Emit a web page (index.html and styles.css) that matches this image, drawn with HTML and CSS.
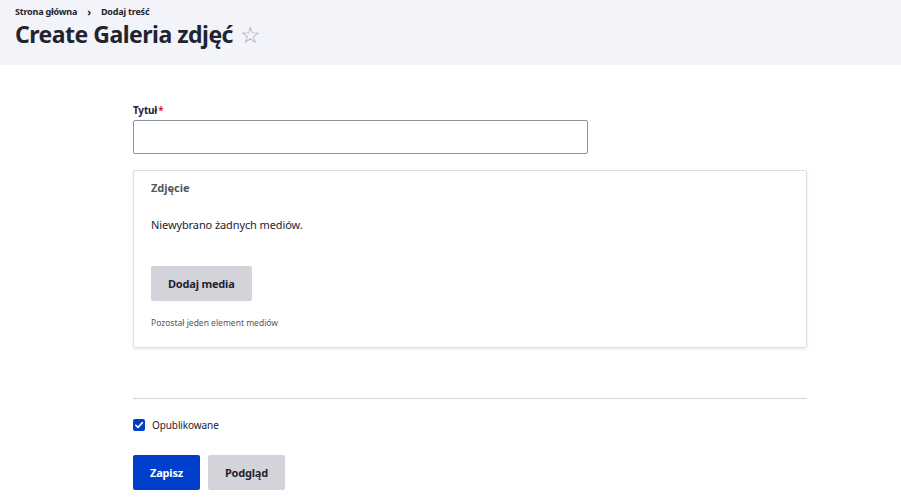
FILE: index.html
```html
<!DOCTYPE html>
<html lang="pl">
<head>
<meta charset="utf-8">
<title>Create Galeria zdjęć</title>
<link rel="stylesheet" href="styles.css">
</head>
<body>
<header class="page-header">
  <nav class="breadcrumb">
    <a href="#">Strona główna</a>
    <span class="sep">›</span>
    <a href="#">Dodaj treść</a>
  </nav>
  <h1 class="title">Create Galeria zdjęć <span class="star">☆</span></h1>
</header>
<main class="content">
  <form class="form">
    <div class="field">
      <label class="label">Tytuł<span class="req">*</span></label>
      <input class="input" type="text">
    </div>
    <fieldset class="media">
      <div class="media-legend">Zdjęcie</div>
      <p class="media-empty">Niewybrano żadnych mediów.</p>
      <button type="button" class="btn btn-secondary btn-media">Dodaj media</button>
      <p class="media-note">Pozostał jeden element mediów</p>
    </fieldset>
    <hr class="divider">
    <label class="check">
      <span class="box"><svg viewBox="0 0 12 12" width="12" height="12"><path d="M2.8 6.2 5 8.4 9.4 3.6" fill="none" stroke="#fff" stroke-width="1.6" stroke-linecap="round" stroke-linejoin="round"/></svg></span>
      <span class="check-label">Opublikowane</span>
    </label>
    <div class="actions">
      <button type="button" class="btn btn-primary">Zapisz</button>
      <button type="button" class="btn btn-secondary">Podgląd</button>
    </div>
  </form>
</main>
</body>
</html>
```
FILE: styles.css
```css
* { box-sizing: border-box; }
html, body { margin: 0; padding: 0; }
body {
  font-family: "Noto Sans", "Open Sans", sans-serif;
  color: #222330;
  background: #fff;
  width: 901px;
  height: 497px;
  overflow: hidden;
}
.page-header {
  background: #f3f4f9;
  height: 65px;
  padding: 5px 15px 0;
}
.breadcrumb {
  font-size: 9px;
  font-weight: 700;
  letter-spacing: -0.2px;
  display: flex;
  gap: 7px;
  align-items: center;
  height: 13px;
}
.breadcrumb a { color: #222330; text-decoration: none; }
.breadcrumb .sep { font-size: 11px; padding: 0 3px; }
.title {
  margin: 0;
  font-size: 23px;
  font-weight: 700;
  letter-spacing: -0.5px;
  line-height: 32px;
  display: flex;
  align-items: center;
  gap: 7px;
}
.star {
  font-weight: 400;
  color: #a6a8b0;
  font-size: 23px;
  letter-spacing: 0;
}
.content { padding: 38px 0 0 133px; }
.form { width: 674px; }
.field { display: flex; flex-direction: column; }
.label {
  font-size: 10px;
  font-weight: 700;
  letter-spacing: -0.2px;
  line-height: 14px;
  margin-bottom: 3px;
}
.req { color: #dc2323; margin-left: 1px; }
.input {
  width: 455px;
  height: 34px;
  border: 1px solid #8e929c;
  border-radius: 2px;
  margin: 0;
}
.media {
  margin: 16px 0 0;
  padding: 10px 17px 0;
  border: 1px solid #dedfe4;
  border-radius: 2px;
  box-shadow: 0 1px 3px rgba(0,0,0,0.1);
  height: 178px;
  display: flex;
  flex-direction: column;
  align-items: flex-start;
}
.media-legend {
  font-size: 11px;
  font-weight: 700;
  color: #55565b;
  line-height: 14px;
}
.media-empty {
  margin: 22px 0 0;
  font-size: 11px;
  letter-spacing: -0.1px;
  line-height: 16px;
}
.btn {
  font-family: inherit;
  font-weight: 700;
  font-size: 11px;
  letter-spacing: -0.2px;
  border: 0;
  border-radius: 2px;
  height: 35px;
  padding: 0 17px;
  cursor: pointer;
}
.btn-secondary { background: #d3d4d9; color: #222330; }
.btn-primary { background: #003ecc; color: #fff; }
.btn-media { margin-top: 33px; }
.media-note {
  margin: 16px 0 0;
  font-size: 8.5px;
  color: #55565b;
  line-height: 12px;
}
.divider {
  margin: 50px 0 0;
  border: 0;
  border-top: 1px solid #d4d4d8;
}
.check {
  display: flex;
  align-items: center;
  gap: 7px;
  margin-top: 19px;
}
.box {
  width: 12px;
  height: 12px;
  background: #003ecc;
  border-radius: 2px;
  display: flex;
}
.check-label { font-size: 10px; letter-spacing: -0.1px; line-height: 14px; }
.actions {
  display: flex;
  gap: 8px;
  margin-top: 23px;
}
```
